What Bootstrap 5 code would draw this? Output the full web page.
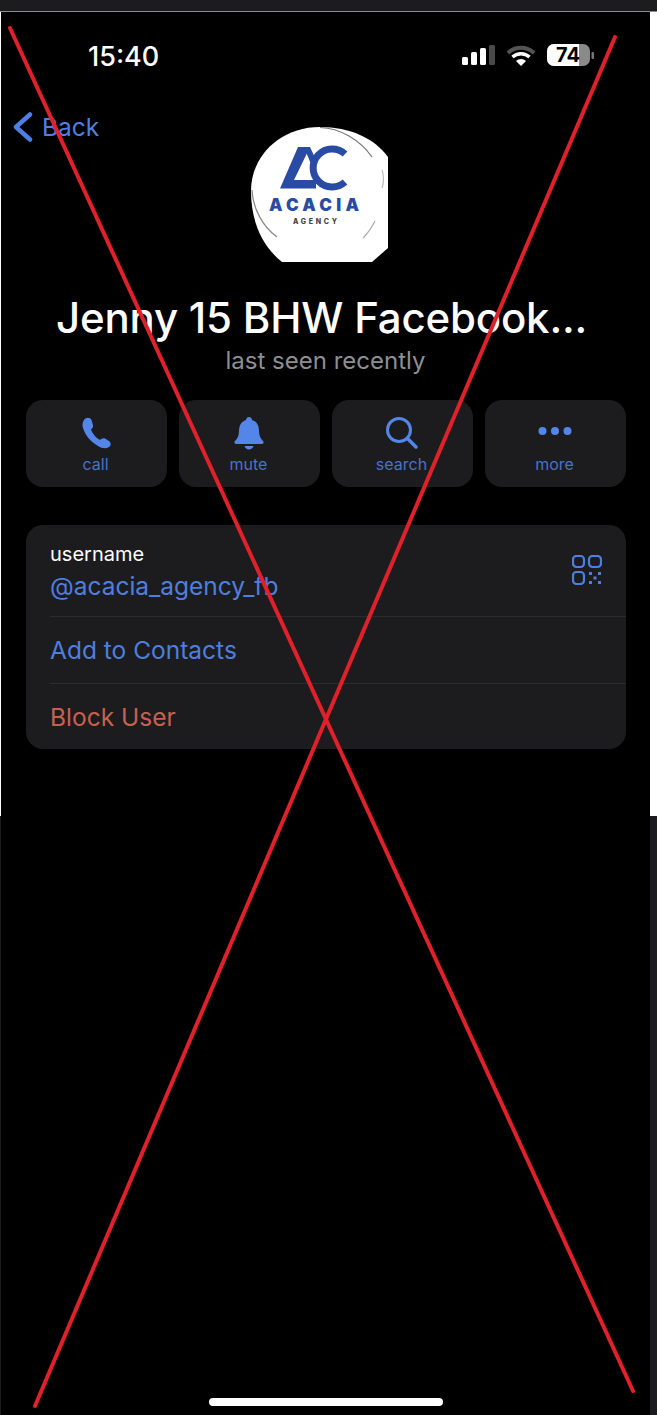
<!DOCTYPE html>
<html lang="en">
<head>
    <meta charset="UTF-8">
    <meta name="viewport" content="width=device-width, initial-scale=1.0">
    <title>Jenny 15 BHW Facebook</title>
    <link href="https://cdn.jsdelivr.net/npm/bootstrap@5.3.2/dist/css/bootstrap.min.css" rel="stylesheet">
    <style>
        html, body { height: 100%; background: #000; }
        body { font-family: Inter, "Liberation Sans", sans-serif; overflow: hidden; }
        .shot-page { width: 657px; height: 1415px; position: relative; background: #000; }
        .shot-top { height: 12px; background: #1c1c1e; border-bottom: 1px solid #8c8c8c; }
        .shot-upper { height: 804px; border-left: 1px solid #fff; border-right: 7px solid #fff; }
        .shot-lower { height: 599px; border-left: 1px solid #1c1c1e; border-right: 7px solid #1c1c1e; padding: 582px 0 0 208px; }
        .status-row { height: 100px; padding: 30px 54px 0 87px; }
        .clock { color: #fff; font-size: 27px; font-weight: 500; line-height: 30px; }
        .head-row { height: 150px; }
        .back-link { width: 249px; height: 30px; color: #4f7fe3; font-size: 24.500px; line-height: 30px; padding-left: 11px; gap: 9px; }
        .avatar-box { width: 140px; height: 136px; margin-top: 14px; }
        .peer-name { color: #fff; font-size: 42px; font-weight: 500; line-height: 50px; margin: 31px 0 0; padding-right: 8px; white-space: nowrap; letter-spacing: -.2px; }
        .peer-seen { color: #8e8e93; font-size: 24px; line-height: 30px; margin-top: 3px; }
        .action-row { padding: 0 24px 0 25px; gap: 12px; margin-top: 24px; }
        .action-tile { width: 141px; height: 87px; background: #1c1c1e; border-radius: 17px; color: #4a72c8; font-size: 16px; padding: 16px 2px 0 0; }
        .action-tile svg { display: block; height: 34px; margin-bottom: 2px; }
        .info-group { margin: 38px 24px 0 25px; background: #1c1c1e; border-radius: 17px; overflow: hidden; }
        .info-row { margin-left: 24px; padding-right: 24px; font-size: 24.500px; color: #4f7fde; }
        .info-row + .info-row { border-top: 1px solid #2c2c2e; }
        .row-user { height: 91px; padding-top: 15px; }
        .row-add { height: 67px; }
        .row-block { height: 66px; padding-top: 2px; color: #c8604f; }
        .user-label { color: #fff; font-size: 20px; line-height: 28px; }
        .user-value { line-height: 36px; }
        .qr-mark { margin-top: 15px; }
        .home-bar { width: 234px; height: 8px; background: #fff; border-radius: 4px; }
        .cross-lines { position: absolute; left: 0; top: 0; pointer-events: none; }
    </style>
</head>
<body>
    <div class="shot-page">
        <div class="shot-top"></div>
        <div class="shot-upper">
            <div class="status-row d-flex justify-content-between">
                <span class="clock">15:40</span>
                <svg width="134" height="26" viewBox="0 0 134 26">
                    <rect x="0" y="15" width="6" height="8" rx="1.500" fill="#fff"/>
                    <rect x="9" y="10" width="6" height="13" rx="1.500" fill="#fff"/>
                    <rect x="18" y="6" width="6" height="17" rx="1.500" fill="#fff"/>
                    <rect x="27" y="3" width="6" height="20" rx="1.500" fill="#4a4a4a"/>
                    <path d="M46 11 a19 19 0 0 1 26 0" fill="none" stroke="#555" stroke-width="4"/>
                    <path d="M50.500 15 a12.500 12.500 0 0 1 17 0" fill="none" stroke="#fff" stroke-width="3.500"/>
                    <path d="M54 19 a7 7 0 0 1 10 0 L59 24z" fill="#fff"/>
                    <rect x="85" y="2" width="43" height="22" rx="7" fill="#8a8a8a"/>
                    <path d="M92 2 H117 V24 H92 a7 7 0 0 1 -7 -7 V9 a7 7 0 0 1 7 -7z" fill="#fff"/>
                    <text x="106" y="20" text-anchor="middle" font-family="Inter, 'Liberation Sans', sans-serif" font-size="20" font-weight="700" fill="#000">74</text>
                    <rect x="129.500" y="10" width="2.500" height="7" rx="1" fill="#777"/>
                </svg>
            </div>
            <div class="head-row d-flex align-items-start">
                <div class="back-link d-flex align-items-center">
                    <svg width="21" height="30" viewBox="0 0 21 30"><path d="M18 2.500 L4 15 L18 27.500" fill="none" stroke="#4f7fe3" stroke-width="4.500" stroke-linecap="round" stroke-linejoin="round"/></svg>
                    <span>Back</span>
                </div>
                <div class="avatar-box">
                    <svg width="140" height="136" viewBox="0 0 140 136">
                        <path d="M32 136 C12 120 1 95 1 65 C1 30 30 1 70 1 C100 1 124 12 138 31 V122 L122 136z" fill="#fff"/>
                        <path d="M70 1.500 C90 2 110 14 122 31" fill="none" stroke="#777" stroke-width="1.200"/>
                        <path d="M132 44 C134 50 134 56 132 62" fill="none" stroke="#bbb" stroke-width="1.200"/>
                        <path d="M113 112 C118 107 122 101 125 95" fill="none" stroke="#aaa" stroke-width="1.200"/>
                        <path d="M2 64 C3 82 12 100 27 111" fill="none" stroke="#888" stroke-width="1.200"/>
                        <path d="M30 62.500 L48 21 H60 L44 54 H66 V62.500z" fill="#2a4ba3"/>
                        <path d="M54 21 H60 L67 36 L63 43z" fill="#2a4ba3"/>
                        <path d="M95 28 A19 19 0 1 0 95 56" fill="none" stroke="#2a4ba3" stroke-width="7"/>
                        <text x="19" y="85" textLength="90" lengthAdjust="spacing" font-family="Inter, 'Liberation Sans', sans-serif" font-size="17" font-weight="900" fill="#2a4ba3">ACACIA</text>
                        <text x="43" y="98" textLength="44" lengthAdjust="spacing" font-family="Inter, 'Liberation Sans', sans-serif" font-size="7" font-weight="800" fill="#444">AGENCY</text>
                    </svg>
                </div>
            </div>
            <h1 class="peer-name text-center">Jenny 15 BHW Facebook...</h1>
            <div class="peer-seen text-center">last seen recently</div>
            <div class="action-row d-flex">
                <div class="action-tile d-flex flex-column align-items-center">
                    <svg width="34" height="34" viewBox="0 0 34 34"><path d="M5 4 C7 1 11 1 12.500 4 L14 9 C14.500 11 13 12.500 12 13.500 C13 17 17 22 21 24 C22 23 24 22 26 22.500 L30 25 C32.500 27 32 30 30 31 C27 33 23 32.500 19 30 C12 26 6 19 4 12 C3 9 3.500 6 5 4z" fill="#5486ea"/></svg>
                    <span>call</span>
                </div>
                <div class="action-tile d-flex flex-column align-items-center">
                    <svg width="34" height="34" viewBox="0 0 34 34"><path d="M17 1 C15 1 14 2.500 14 4 C9 5.500 7 10 7 15 C7 20 5 23 3 25 C2 26 2.500 28 4 28 H30 C31.500 28 32 26 31 25 C29 23 27 20 27 15 C27 10 25 5.500 20 4 C20 2.500 19 1 17 1z M12.500 30 H21.500 C21 32 19 33.500 17 33.500 C15 33.500 13 32 12.500 30z" fill="#5486ea"/></svg>
                    <span>mute</span>
                </div>
                <div class="action-tile d-flex flex-column align-items-center">
                    <svg width="34" height="34" viewBox="0 0 34 34"><circle cx="14" cy="14" r="11.500" fill="none" stroke="#5486ea" stroke-width="3"/><path d="M22.500 22.500 L31 31" stroke="#5486ea" stroke-width="3.500" stroke-linecap="round"/></svg>
                    <span>search</span>
                </div>
                <div class="action-tile d-flex flex-column align-items-center">
                    <svg width="34" height="34" viewBox="0 0 34 34"><circle cx="4.500" cy="15" r="4" fill="#5486ea"/><circle cx="17" cy="15" r="4" fill="#5486ea"/><circle cx="29.500" cy="15" r="4" fill="#5486ea"/></svg>
                    <span>more</span>
                </div>
            </div>
            <div class="info-group">
                <div class="info-row row-user d-flex justify-content-between">
                    <div>
                        <div class="user-label">username</div>
                        <div class="user-value">@acacia_agency_fb</div>
                    </div>
                    <svg class="qr-mark" width="30" height="30" viewBox="0 0 30 30" fill="none" stroke="#4f7fde" stroke-width="2.200">
                        <rect x="1" y="1" width="11" height="11" rx="3.500"/>
                        <rect x="17" y="1" width="12" height="11" rx="3.500"/>
                        <rect x="1" y="17" width="11" height="12" rx="3.500"/>
                        <g fill="#4f7fde" stroke="none">
                            <rect x="17" y="17" width="3" height="3"/><rect x="26" y="17" width="3" height="3"/><rect x="21.500" y="21.500" width="3" height="3"/><rect x="17" y="26" width="3" height="3"/><rect x="26" y="26" width="3" height="3"/>
                        </g>
                    </svg>
                </div>
                <div class="info-row row-add d-flex align-items-center">Add to Contacts</div>
                <div class="info-row row-block d-flex align-items-center">Block User</div>
            </div>
        </div>
        <div class="shot-lower">
            <div class="home-bar"></div>
        </div>
        <svg class="cross-lines" width="657" height="1415" viewBox="0 0 657 1415">
            <line x1="10" y1="28" x2="633" y2="1391" stroke="#e0202a" stroke-width="4" stroke-linecap="round"/>
            <line x1="615" y1="37" x2="35" y2="1406" stroke="#e0202a" stroke-width="4" stroke-linecap="round"/>
        </svg>
    </div>
    <script src="https://cdn.jsdelivr.net/npm/bootstrap@5.3.2/dist/js/bootstrap.bundle.min.js"></script>
</body>
</html>
